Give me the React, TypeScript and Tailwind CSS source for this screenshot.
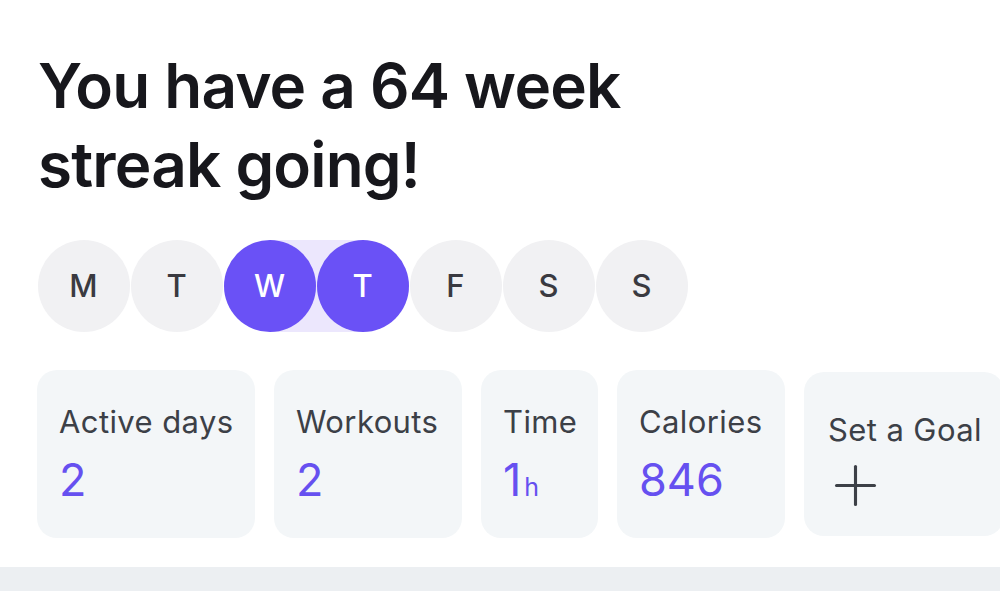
import { Plus } from "lucide-react";

const days = [
  { label: "M", active: false },
  { label: "T", active: false },
  { label: "W", active: true },
  { label: "T", active: true },
  { label: "F", active: false },
  { label: "S", active: false },
  { label: "S", active: false },
];

const stats = [
  { label: "Active days", value: "2", width: "w-[218px]" },
  { label: "Workouts", value: "2", width: "w-[188px]" },
  { label: "Time", value: "1", unit: "h", width: "w-[117px]" },
  { label: "Calories", value: "846", width: "w-[168px]" },
];

export default function App() {
  return (
    <div className="w-[1000px] h-[591px] overflow-hidden bg-white flex flex-col" style={{ fontFamily: "Inter, 'Noto Sans', sans-serif" }}>
      <div className="pl-[38px] pt-[46px]">
        <h1 className="text-[62px] leading-[79px] font-semibold text-[#17171c] tracking-[-0.8px]">
          You have a 64 week
          <br />
          streak going!
        </h1>
      </div>

      <div className="pl-[37px] mt-[36px] flex">
        {days.map((d, i) => {
          const nextActive = days[i + 1]?.active;
          return (
            <div key={i} className="relative w-[93px] h-[92px] flex items-center justify-center">
              {d.active && nextActive && (
                <div className="absolute left-[46px] top-0 w-[93px] h-[92px] bg-[#ece7fd]" />
              )}
              <div
                className={
                  d.active
                    ? "relative w-[92px] h-[92px] rounded-full bg-[#6a51f6] text-white flex items-center justify-center text-[31px] font-medium"
                    : "relative w-[92px] h-[92px] rounded-full bg-[#f1f1f3] text-[#3a3a40] flex items-center justify-center text-[31px] font-medium"
                }
              >
                {d.label}
              </div>
            </div>
          );
        })}
      </div>

      <div className="pl-[37px] mt-[38px] flex gap-[19px] items-start">
        {stats.map((s) => (
          <div key={s.label} className={`${s.width} h-[168px] shrink-0 rounded-[20px] bg-[#f3f6f8] pl-[22px] pt-[34px]`}>
            <p className="text-[31px] leading-[36px] tracking-[0.4px] text-[#3c4047] whitespace-nowrap">{s.label}</p>
            <p className="mt-[15px] text-[45px] leading-[50px] text-[#6650f0]">
              {s.value}
              {s.unit && <span className="text-[25px] ml-[3px]">{s.unit}</span>}
            </p>
          </div>
        ))}
        <div className="w-[200px] h-[164px] mt-[2px] shrink-0 rounded-[20px] bg-[#f3f6f8] pl-[24px] pt-[40px]">
          <p className="text-[31px] leading-[36px] tracking-[0.4px] text-[#3c4047] whitespace-nowrap">Set a Goal</p>
          <Plus size={65} strokeWidth={1.15} className="text-[#3c4047] mt-[5px] -ml-[5px]" />
        </div>
      </div>

      <div className="mt-[29px] flex-1 bg-[#eceff2]" />
    </div>
  );
}
